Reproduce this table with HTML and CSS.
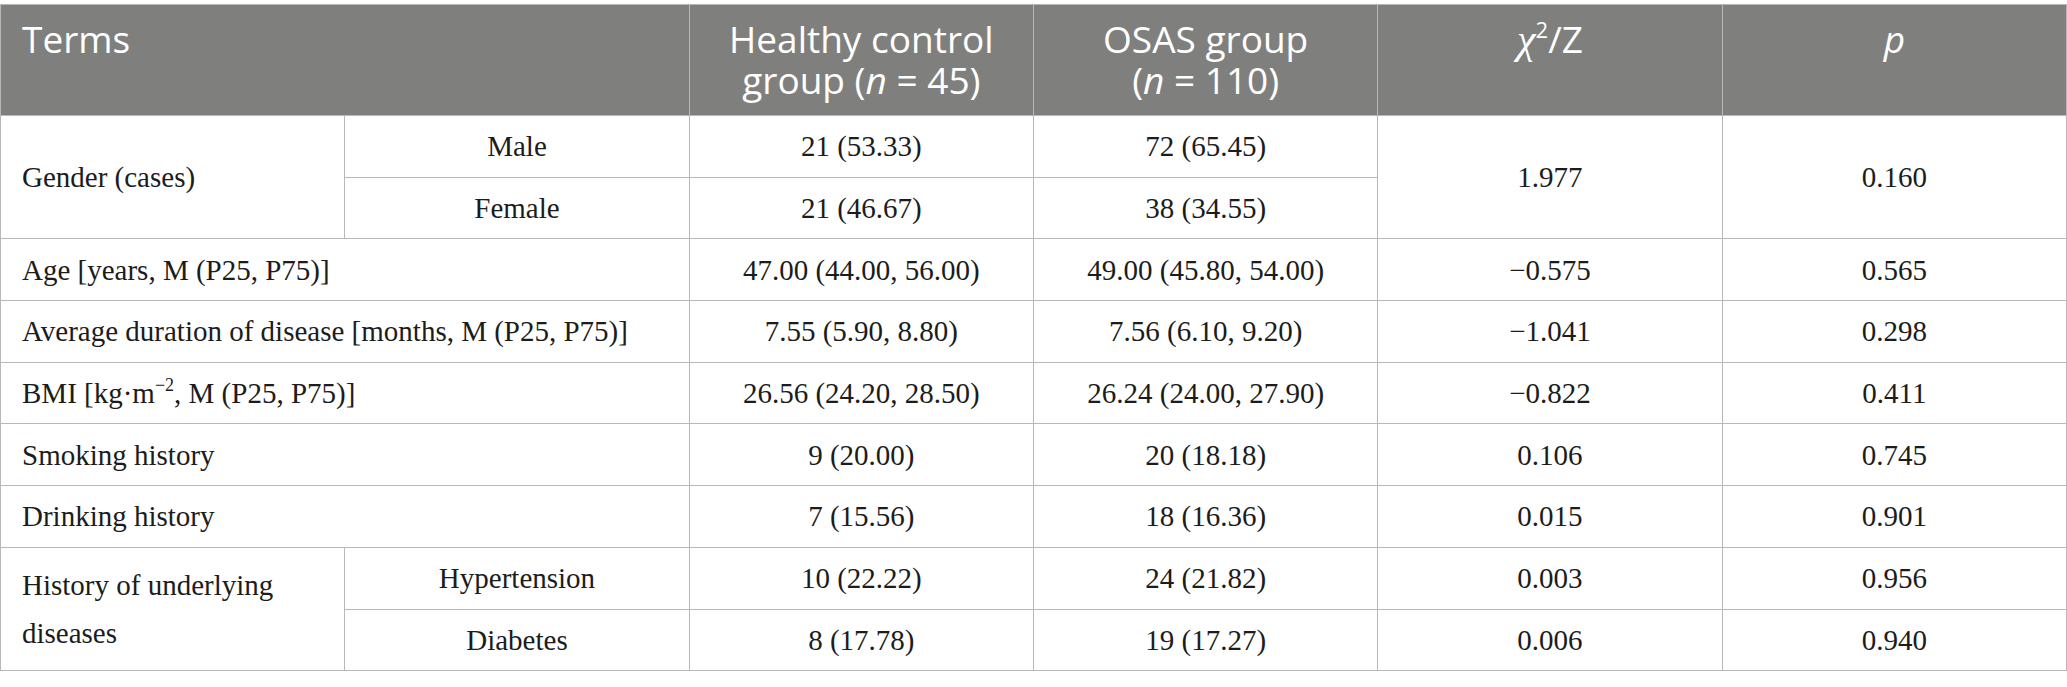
FILE: index.html
```html
<!DOCTYPE html>
<html lang="en">
<head>
<meta charset="utf-8">
<title>Table</title>
<link rel="stylesheet" href="styles.css">
</head>
<body>
<table class="data">
  <colgroup>
    <col class="c"><col class="c"><col class="c"><col class="c"><col class="c"><col class="c">
  </colgroup>
  <thead>
    <tr>
      <th colspan="2" class="left">Terms</th>
      <th>Healthy control<br>group (<i>n</i> = 45)</th>
      <th>OSAS group<br>(<i>n</i> = 110)</th>
      <th><i class="chi">χ</i><sup class="hsup">2</sup>/Z</th>
      <th><i>p</i></th>
    </tr>
  </thead>
  <tbody>
    <tr>
      <td rowspan="2" class="left">Gender (cases)</td>
      <td>Male</td>
      <td>21 (53.33)</td>
      <td>72 (65.45)</td>
      <td rowspan="2">1.977</td>
      <td rowspan="2">0.160</td>
    </tr>
    <tr>
      <td>Female</td>
      <td>21 (46.67)</td>
      <td>38 (34.55)</td>
    </tr>
    <tr>
      <td colspan="2" class="left">Age [years, M (P25, P75)]</td>
      <td>47.00 (44.00, 56.00)</td>
      <td>49.00 (45.80, 54.00)</td>
      <td>−0.575</td>
      <td>0.565</td>
    </tr>
    <tr>
      <td colspan="2" class="left">Average duration of disease [months, M (P25, P75)]</td>
      <td>7.55 (5.90, 8.80)</td>
      <td>7.56 (6.10, 9.20)</td>
      <td>−1.041</td>
      <td>0.298</td>
    </tr>
    <tr>
      <td colspan="2" class="left">BMI [kg·m<sup class="bsup">−2</sup>, M (P25, P75)]</td>
      <td>26.56 (24.20, 28.50)</td>
      <td>26.24 (24.00, 27.90)</td>
      <td>−0.822</td>
      <td>0.411</td>
    </tr>
    <tr>
      <td colspan="2" class="left">Smoking history</td>
      <td>9 (20.00)</td>
      <td>20 (18.18)</td>
      <td>0.106</td>
      <td>0.745</td>
    </tr>
    <tr>
      <td colspan="2" class="left">Drinking history</td>
      <td>7 (15.56)</td>
      <td>18 (16.36)</td>
      <td>0.015</td>
      <td>0.901</td>
    </tr>
    <tr>
      <td rowspan="2" class="left">History of underlying diseases</td>
      <td>Hypertension</td>
      <td>10 (22.22)</td>
      <td>24 (21.82)</td>
      <td>0.003</td>
      <td>0.956</td>
    </tr>
    <tr>
      <td>Diabetes</td>
      <td>8 (17.78)</td>
      <td>19 (17.27)</td>
      <td>0.006</td>
      <td>0.940</td>
    </tr>
  </tbody>
</table>
</body>
</html>
```

FILE: styles.css
```css
html, body {
  margin: 0;
  padding: 0;
  background: #ffffff;
}
body {
  padding-top: 4px;
}
.data {
  width: 2067px;
  table-layout: fixed;
  border-collapse: collapse;
  border: 1px solid #b8b8b8;
}
.data .c {
  width: 16.6667%;
}
.data th,
.data td {
  border: 1px solid #b8b8b8;
  text-align: center;
}
.data thead tr {
  height: 111px;
}
.data th {
  background: #7f807e;
  color: #ffffff;
  font-family: "Open Sans", "Liberation Sans", sans-serif;
  font-weight: 400;
  font-size: 37px;
  line-height: 41px;
  vertical-align: top;
  padding: 13px 10px 13px 10px;
}
.data tbody tr {
  height: 61.7px;
}
.data td {
  font-family: "Liberation Serif", "Times New Roman", serif;
  font-size: 29px;
  line-height: 48px;
  color: #1c1c1c;
  vertical-align: middle;
  padding: 0 20px;
}
.data .left {
  text-align: left;
  padding-left: 21px;
}
.chi {
  font-family: "Liberation Serif", serif;
  font-size: 42px;
}
.hsup {
  font-size: 22px;
  line-height: 0;
  vertical-align: 15px;
}
.bsup {
  font-size: 18px;
  line-height: 0;
  vertical-align: 12px;
}
```
